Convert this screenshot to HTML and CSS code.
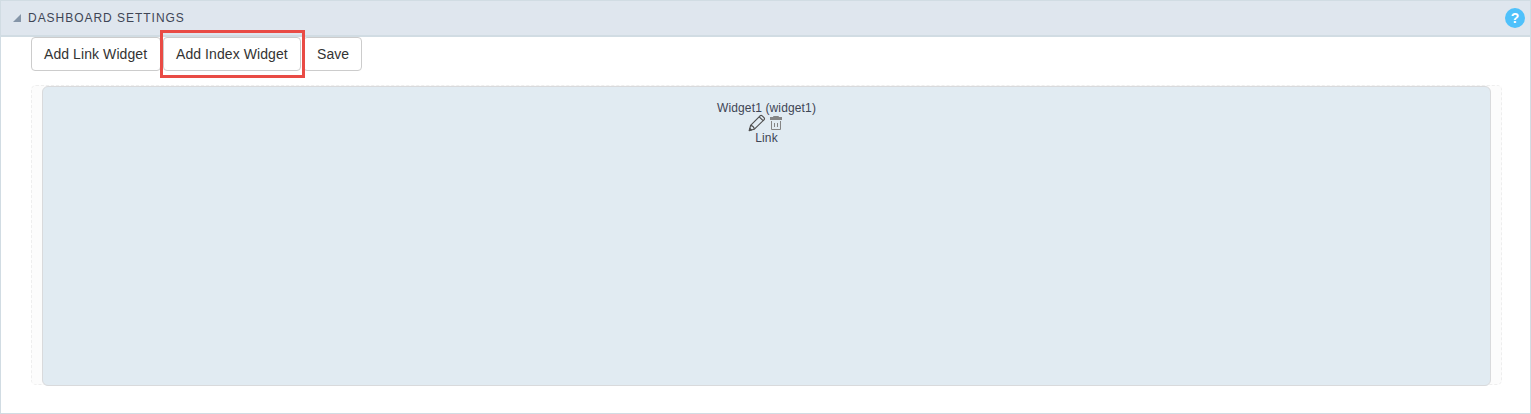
FILE: index.html
```html
<!DOCTYPE html>
<html lang="en">
<head>
<meta charset="utf-8">
<title>Dashboard Settings</title>
<link rel="stylesheet" href="styles.css">
</head>
<body>
<section class="panel">
  <header class="panel-header">
    <svg class="caret" width="8" height="8" viewBox="0 0 8 8"><path d="M8 0V8H0Z" fill="#8595a8"/></svg>
    <h1 class="title">DASHBOARD SETTINGS</h1>
    <span class="help">?</span>
  </header>
  <div class="toolbar">
    <button class="btn btn-link">Add Link Widget</button>
    <button class="btn btn-index">Add Index Widget<span class="highlight"></span></button>
    <button class="btn btn-save">Save</button>
  </div>
  <div class="grid">
    <article class="widget">
      <div class="name">Widget1 (widget1)</div>
      <div class="actions">
        <svg width="18" height="18" viewBox="0 0 18 18" fill="none" stroke="#505050" stroke-width="1.15" stroke-linejoin="round"><path d="M1.4 16.4L2.6 11.4L12.1 1.8Q13.1 .9 14.2 1.9L16 3.7Q17 4.8 16 5.8L6.4 15.2Z"/><path d="M2.6 11.4Q5.8 12 6.4 15.2M11.2 2.8L15.1 6.7"/><path d="M1.2 16.6L1.8 14.4L3.4 16Z" fill="#505050"/></svg>
        <svg width="14" height="16" viewBox="0 0 14 16" fill="none" stroke="#858585" stroke-width="1"><path d="M4.5 2.5V1.5H9.5V2.5"/><path d="M1 2H13V5H1Z" fill="#858585" stroke="none"/><path d="M2.5 6V14.5H11.5V6M5.5 8V12M8.5 8V12"/></svg>
      </div>
      <div class="kind">Link</div>
    </article>
  </div>
</section>
</body>
</html>
```
FILE: styles.css
```css
* { box-sizing: border-box; }
body { margin: 0; background: #fff; color: #333; font-family: "Liberation Sans", Arial, sans-serif; }
.panel { height: 414px; border: 1px solid #d1dce3; }
.panel-header { display: flex; align-items: center; height: 36px; padding: 0 5px 0 12px; background: #dfe6ee; border-bottom: 2px solid #d1dce3; }
.caret { display: block; margin-right: 7px; }
.title { margin: 0; font-size: 12px; line-height: 14px; font-weight: 400; letter-spacing: 0.97px; color: #3e4555; }
.help { width: 20px; height: 20px; margin-left: auto; border-radius: 50%; background: #4fc1fb; color: #fff; font-weight: 700; font-size: 14px; line-height: 20px; text-align: center; }
.toolbar { display: flex; gap: 2px; padding-left: 30px; }
.btn { position: relative; height: 34px; padding: 0 0 0 12px; border: 1px solid #ccc; border-radius: 4px; background: #fff; color: #333; font: 14px/20px "Liberation Sans", Arial, sans-serif; letter-spacing: 0.08px; text-align: left; white-space: nowrap; }
.btn-link { width: 130px; }
.btn-index { width: 138px; z-index: 1; }
.btn-save { width: 59px; padding-left: 13px; }
.highlight { position: absolute; left: -4px; top: -8px; width: 145px; height: 48px; border: 3px solid #e94b45; }
.grid { height: 300px; margin: 14px 28px 0 30px; padding: 0 10px; border: 1px dashed #eee; border-radius: 5px; background: #fcfcfc; }
.widget { display: flex; flex-direction: column; align-items: center; height: 300px; padding-top: 14px; border: 1px solid #d9dadc; border-radius: 6px; background: #e1ebf2; color: #3e4555; font-size: 12px; line-height: 15px; }
.name, .kind { letter-spacing: 0.14px; }
.actions { display: flex; align-items: center; gap: 3px; height: 15px; margin-right: 2px; }
.actions svg { margin-top: -2px; }
```
